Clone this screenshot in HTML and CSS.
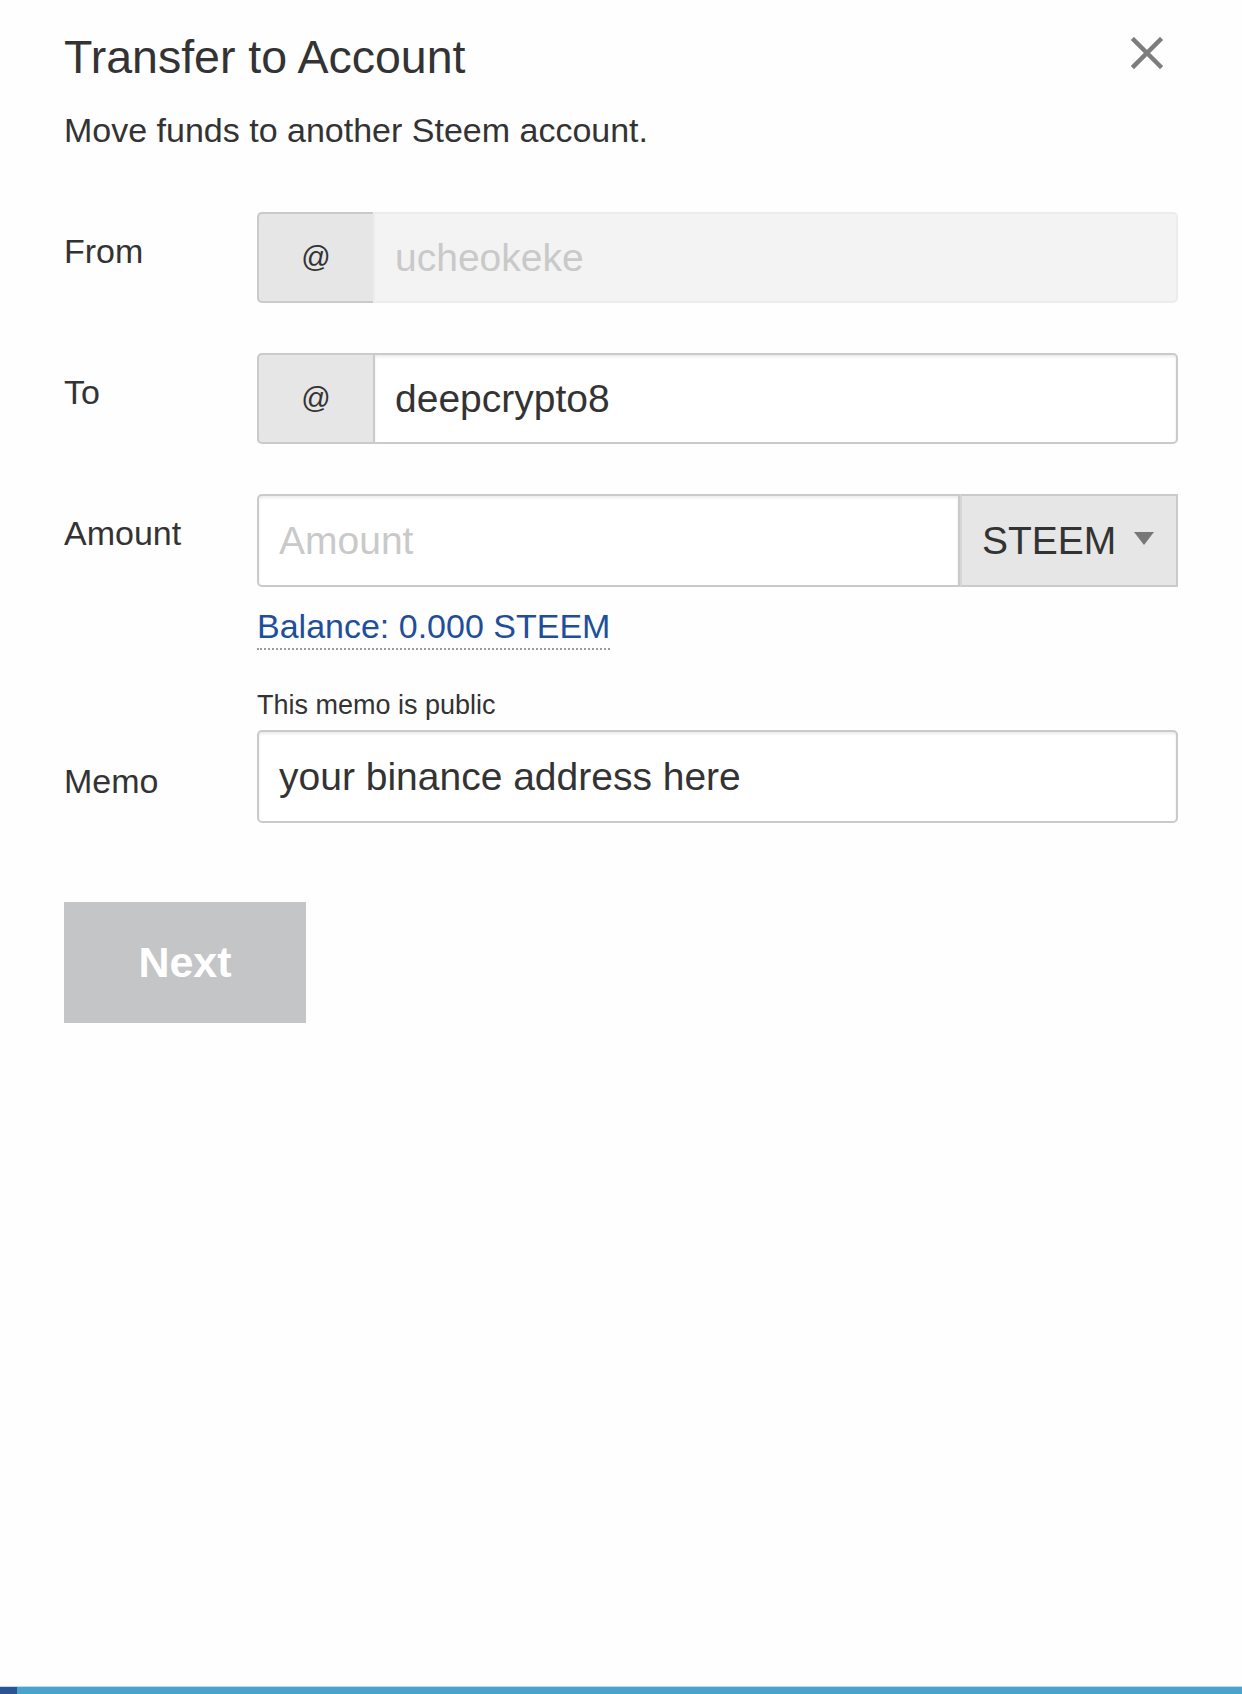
FILE: index.html
```html
<!DOCTYPE html>
<html lang="en">
<head>
  <meta charset="UTF-8" />
  <meta name="viewport" content="width=device-width, initial-scale=1.0"/>
  <title>Transfer to Account</title>
  <link rel="stylesheet" href="styles.css">
</head>
<body>
  <div class="page">
    <div class="modal">
      <div class="header">
        <h1>Transfer to Account</h1>
        <button class="close" aria-label="Close">
          <svg width="32" height="32" viewBox="0 0 32 32">
            <path d="M3 3 L29 29 M29 3 L3 29" stroke="#7d7d7d" stroke-width="4.5" stroke-linecap="square"/>
          </svg>
        </button>
      </div>
      <p class="intro">Move funds to another Steem account.</p>

      <div class="row row-from">
        <label>From</label>
        <div class="group">
          <span class="prefix">@</span>
          <input class="field disabled" type="text" placeholder="ucheokeke" disabled>
        </div>
      </div>

      <div class="row">
        <label>To</label>
        <div class="group">
          <span class="prefix">@</span>
          <input class="field" type="text" value="deepcrypto8">
        </div>
      </div>

      <div class="row row-amount">
        <label>Amount</label>
        <div>
          <div class="group tall">
            <input class="field plain" type="text" placeholder="Amount">
            <div class="asset">STEEM <span class="caret"></span></div>
          </div>
          <a class="balance" href="#">Balance: 0.000 STEEM</a>
        </div>
      </div>

      <div class="row row-memo">
        <label>Memo</label>
        <div>
          <div class="hint">This memo is public</div>
          <input class="field plain single" type="text" value="your binance address here">
        </div>
      </div>

      <button class="next" disabled>Next</button>
    </div>
    <div class="bottom-bar"><span></span></div>
  </div>
</body>
</html>
```

FILE: styles.css
```css
body {
  margin: 0;
  background: #fefefe;
  font-family: "Liberation Sans", Arial, sans-serif;
  color: #333;
}

.page {
  min-height: 100vh;
  display: flex;
  flex-direction: column;
}

.modal {
  flex: 1;
  padding: 34px 64px 0 64px;
}

.header {
  display: flex;
  justify-content: space-between;
  align-items: flex-start;
}

h1 {
  margin: 0;
  font-size: 46.5px;
  line-height: 46px;
  font-weight: 400;
  color: #333;
}

.close {
  background: none;
  border: none;
  padding: 0;
  margin: 3px 15px 0 0;
  width: 32px;
  height: 32px;
  cursor: pointer;
}

.intro {
  margin: 33px 0 0 0;
  font-size: 34px;
  line-height: 34px;
}

.row {
  display: grid;
  grid-template-columns: 193px 1fr;
  margin-top: 50px;
}

.row-from {
  margin-top: 65px;
}

.row label {
  font-size: 34px;
  line-height: 34px;
  padding-top: 22px;
}

.row-memo {
  margin-top: 42px;
}

.row-memo label {
  padding-top: 72px;
}

.group {
  display: flex;
  height: 91px;
}

.group.tall {
  height: 93px;
}

.prefix {
  width: 114px;
  flex: none;
  display: flex;
  align-items: center;
  justify-content: center;
  background: #e6e6e6;
  border: 2px solid #cacaca;
  border-right: none;
  border-radius: 5px 0 0 5px;
  font-size: 29px;
  color: #333;
}

.field {
  flex: 1;
  min-width: 0;
  height: 100%;
  box-sizing: border-box;
  border: 2px solid #cacaca;
  border-radius: 0 5px 5px 0;
  box-shadow: inset 0 2px 3px rgba(0, 0, 0, 0.08);
  background: #fff;
  padding: 0 20px;
  font-family: inherit;
  font-size: 39px;
  color: #333;
  outline: none;
}

.field::placeholder {
  color: #c9c9c9;
}

.field.disabled {
  background: #f3f3f3;
  border-color: #ececec;
  box-shadow: none;
}

.field.plain {
  border-radius: 5px 0 0 5px;
}

.field.single {
  width: 100%;
  height: 93px;
  border-radius: 5px;
  display: block;
}

.asset {
  width: 218px;
  flex: none;
  box-sizing: border-box;
  display: flex;
  align-items: center;
  justify-content: space-between;
  padding: 0 22px 0 20px;
  background: #e6e6e6;
  border: 2px solid #cacaca;
  border-left: 2px solid #d6d6d6;
  font-size: 39px;
  color: #333;
}

.caret {
  width: 0;
  height: 0;
  border-left: 10px solid transparent;
  border-right: 10px solid transparent;
  border-top: 13px solid #777;
  margin-top: -4px;
}

.balance {
  display: inline-block;
  vertical-align: top;
  margin-top: 22px;
  font-size: 34px;
  line-height: 34px;
  padding-bottom: 5px;
  color: #1f4f9a;
  text-decoration: none;
  border-bottom: 2px dotted #9a9a9a;
}

.hint {
  font-size: 27px;
  line-height: 27px;
  margin-bottom: 11px;
  color: #333;
}

.next {
  display: block;
  margin-top: 79px;
  width: 242px;
  height: 121px;
  border: none;
  background: #c4c5c7;
  color: #fff;
  font-family: inherit;
  font-size: 43px;
  font-weight: 700;
  padding: 0;
}

.bottom-bar {
  height: 7px;
  background: #4aa3cc;
  border-top: 1px solid #b7dcec;
  display: flex;
}

.bottom-bar span {
  width: 17px;
  background: #2b5592;
}
```
